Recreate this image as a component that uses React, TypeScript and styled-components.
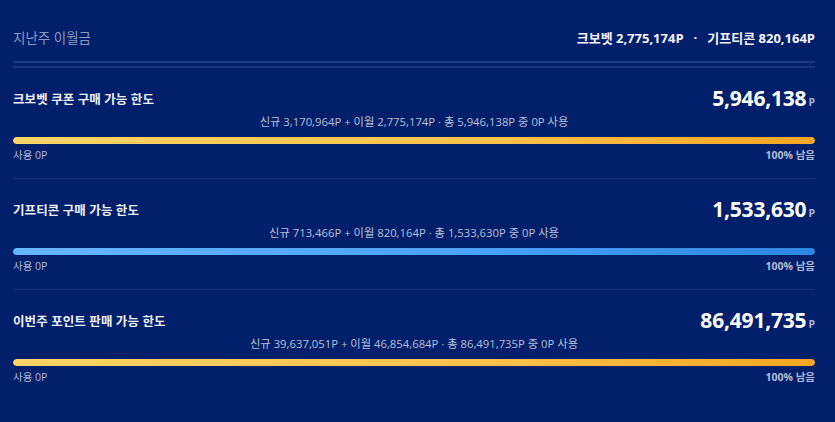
import { createGlobalStyle } from "styled-components";
import styled from "styled-components";

const GlobalStyle = createGlobalStyle`
  html, body {
    margin: 0;
    padding: 0;
    background: #021f6b;
  }
  body {
    font-family: "Open Sans", "Noto Sans CJK KR", sans-serif;
  }
`;

const Panel = styled.div`
  background: #021f6b;
  width: 835px;
  height: 422px;
  box-sizing: border-box;
  padding: 0 20px 0 13px;
  color: #ffffff;
  border-radius: 0 4px 4px 0;
  overflow: hidden;
`;

const Header = styled.div`
  display: flex;
  align-items: center;
  justify-content: space-between;
  padding: 27px 0 14px;
  border-bottom: 2px solid #1c3a85;
`;

const HeaderLabel = styled.span`
  font-size: 13.5px;
  color: #8e9abb;
`;

const HeaderValues = styled.span`
  font-size: 13px;
  font-weight: 700;
  color: #f2f4fa;
  display: flex;
  gap: 10px;
`;

const HeaderLine = styled.div`
  height: 2px;
  margin-top: 3px;
  background: #1a3680;
`;

const Section = styled.section<{ $last?: boolean }>`
  padding: 16px 0 16px;
  border-bottom: ${(p) => (p.$last ? "none" : "1px solid #17327a")};
`;

const TopRow = styled.div`
  display: flex;
  align-items: center;
  justify-content: space-between;
  height: 28px;
`;

const Title = styled.h3`
  margin: 0;
  font-size: 12.5px;
  font-weight: 700;
  color: #eef1f8;
  letter-spacing: 0.1px;
`;

const Amount = styled.div`
  display: flex;
  align-items: baseline;
  gap: 2px;
`;

const AmountValue = styled.span`
  font-size: 21px;
  font-weight: 700;
  color: #ffffff;
  letter-spacing: -0.2px;
`;

const AmountUnit = styled.span`
  font-size: 10.5px;
  font-weight: 700;
  color: #a9b4d2;
`;

const Breakdown = styled.div`
  text-align: center;
  font-size: 11.3px;
  color: #b7c0da;
  margin-top: 2px;
  line-height: 16px;
`;

const Track = styled.div`
  margin-top: 7px;
  height: 7px;
  border-radius: 4px;
  background: #0f2b73;
  overflow: hidden;
`;

const Fill = styled.div<{ $tone: "gold" | "blue" }>`
  height: 100%;
  border-radius: 4px;
  background: ${(p) =>
    p.$tone === "gold"
      ? "linear-gradient(90deg, #ffd466 0%, #fcc24a 60%, #f4a623 100%)"
      : "linear-gradient(90deg, #67b6ff 0%, #4aa0f3 60%, #2d86e4 100%)"};
`;

const Footer = styled.div`
  display: flex;
  justify-content: space-between;
  margin-top: 4px;
  font-size: 10.5px;
  line-height: 14px;
  color: #b3bcd6;
`;

const Remain = styled.span`
  font-weight: 700;
`;

type Limit = {
  title: string;
  amount: string;
  breakdown: string;
  tone: "gold" | "blue";
  used: number;
};

const limits: Limit[] = [
  {
    title: "크보벳 쿠폰 구매 가능 한도",
    amount: "5,946,138",
    breakdown: "신규 3,170,964P + 이월 2,775,174P · 총 5,946,138P 중 0P 사용",
    tone: "gold",
    used: 0,
  },
  {
    title: "기프티콘 구매 가능 한도",
    amount: "1,533,630",
    breakdown: "신규 713,466P + 이월 820,164P · 총 1,533,630P 중 0P 사용",
    tone: "blue",
    used: 0,
  },
  {
    title: "이번주 포인트 판매 가능 한도",
    amount: "86,491,735",
    breakdown: "신규 39,637,051P + 이월 46,854,684P · 총 86,491,735P 중 0P 사용",
    tone: "gold",
    used: 0,
  },
];

export default function App() {
  return (
    <>
      <GlobalStyle />
      <Panel>
        <Header>
          <HeaderLabel>지난주 이월금</HeaderLabel>
          <HeaderValues>
            <span>크보벳 2,775,174P</span>
            <span>·</span>
            <span>기프티콘 820,164P</span>
          </HeaderValues>
        </Header>
        <HeaderLine />
        {limits.map((l, i) => (
          <Section key={l.title} $last={i === limits.length - 1}>
            <TopRow>
              <Title>{l.title}</Title>
              <Amount>
                <AmountValue>{l.amount}</AmountValue>
                <AmountUnit>P</AmountUnit>
              </Amount>
            </TopRow>
            <Breakdown>{l.breakdown}</Breakdown>
            <Track>
              <Fill $tone={l.tone} style={{ width: `${100 - l.used}%` }} />
            </Track>
            <Footer>
              <span>사용 {l.used}P</span>
              <Remain>{100 - l.used}% 남음</Remain>
            </Footer>
          </Section>
        ))}
      </Panel>
    </>
  );
}
